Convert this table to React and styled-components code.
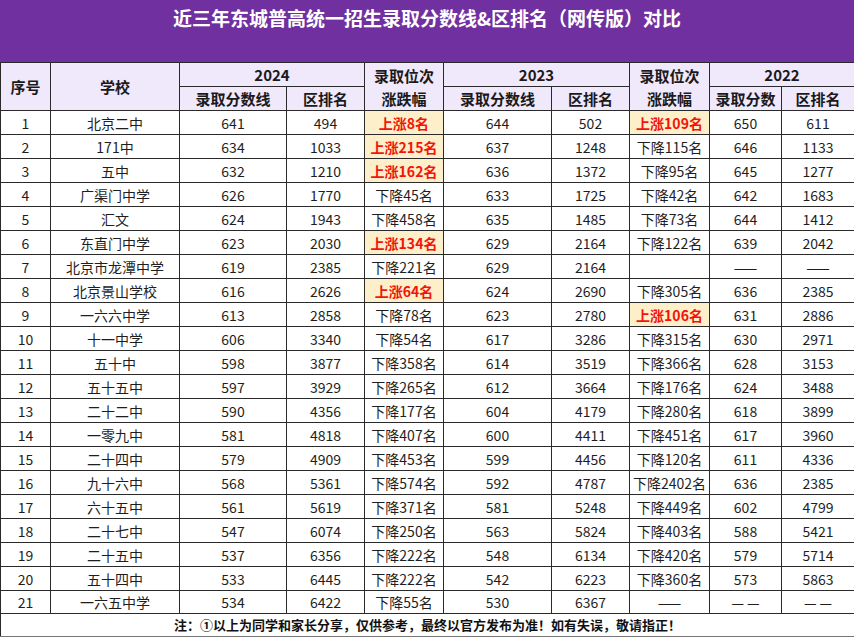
import React from "react";
import styled, { createGlobalStyle } from "styled-components";

const Global = createGlobalStyle`
  html, body { margin: 0; padding: 0; background: #fff; }
  body { font-family: "Noto Sans CJK SC", "Noto Sans", sans-serif; }
`;

const Page = styled.div`
  width: 854px;
  height: 637px;
  box-sizing: border-box;
  overflow: hidden;
  display: flex;
  flex-direction: column;
`;

const TitleBar = styled.div`
  height: 62px;
  flex: none;
  background: #7030a0;
  color: #fff;
  font-weight: 700;
  font-size: 19px;
  display: flex;
  justify-content: center;
  align-items: flex-start;
  padding-top: 5px;
  box-sizing: border-box;
  line-height: 26px;
`;

const Table = styled.table`
  width: 854px;
  border-collapse: collapse;
  table-layout: fixed;
`;

const Row = styled.tr`
  height: ${(p) => p.$h || 24}px;
`;

const Th = styled.th`
  background: #f0e8fb;
  border: 1px solid #2a2a2a;
  font-size: 15px;
  font-weight: 700;
  color: #1a1a1a;
  padding: 0;
  line-height: ${(p) => (p.$lh ? p.$lh : "22px")};
  text-align: center;
  vertical-align: middle;
`;

const Td = styled.td`
  border: 1px solid #2a2a2a;
  font-size: 14px;
  color: #1e1e1e;
  padding: 0;
  text-align: center;
  vertical-align: middle;
  line-height: 22px;
  white-space: nowrap;
  background: ${(p) => (p.$hl ? "#fdefc9" : "transparent")};
  ${(p) => p.$hl && `color: #f2140c; font-weight: 700;`}
`;

const Footer = styled.td`
  border: 1px solid #2a2a2a;
  border-bottom-color: #777;
  font-size: 13px;
  font-weight: 700;
  color: #111;
  text-align: center;
  padding: 0;
  line-height: 22px;
`;

const widths = [50, 129, 107, 78, 79, 108, 78, 80, 72, 73];

const data = [
  ["1", "北京二中", "641", "494", "上涨8名", "644", "502", "上涨109名", "650", "611"],
  ["2", "171中", "634", "1033", "上涨215名", "637", "1248", "下降115名", "646", "1133"],
  ["3", "五中", "632", "1210", "上涨162名", "636", "1372", "下降95名", "645", "1277"],
  ["4", "广渠门中学", "626", "1770", "下降45名", "633", "1725", "下降42名", "642", "1683"],
  ["5", "汇文", "624", "1943", "下降458名", "635", "1485", "下降73名", "644", "1412"],
  ["6", "东直门中学", "623", "2030", "上涨134名", "629", "2164", "下降122名", "639", "2042"],
  ["7", "北京市龙潭中学", "619", "2385", "下降221名", "629", "2164", "", "——", "——"],
  ["8", "北京景山学校", "616", "2626", "上涨64名", "624", "2690", "下降305名", "636", "2385"],
  ["9", "一六六中学", "613", "2858", "下降78名", "623", "2780", "上涨106名", "631", "2886"],
  ["10", "十一中学", "606", "3340", "下降54名", "617", "3286", "下降315名", "630", "2971"],
  ["11", "五十中", "598", "3877", "下降358名", "614", "3519", "下降366名", "628", "3153"],
  ["12", "五十五中", "597", "3929", "下降265名", "612", "3664", "下降176名", "624", "3488"],
  ["13", "二十二中", "590", "4356", "下降177名", "604", "4179", "下降280名", "618", "3899"],
  ["14", "一零九中", "581", "4818", "下降407名", "600", "4411", "下降451名", "617", "3960"],
  ["15", "二十四中", "579", "4909", "下降453名", "599", "4456", "下降120名", "611", "4336"],
  ["16", "九十六中", "568", "5361", "下降574名", "592", "4787", "下降2402名", "636", "2385"],
  ["17", "六十五中", "561", "5619", "下降371名", "581", "5248", "下降449名", "602", "4799"],
  ["18", "二十七中", "547", "6074", "下降250名", "563", "5824", "下降403名", "588", "5421"],
  ["19", "二十五中", "537", "6356", "下降222名", "548", "6134", "下降420名", "579", "5714"],
  ["20", "五十四中", "533", "6445", "下降222名", "542", "6223", "下降360名", "573", "5863"],
  ["21", "一六五中学", "534", "6422", "下降55名", "530", "6367", "——", "— —", "— —"],
];

export default function App() {
  return (
    <>
      <Global />
      <Page>
        <TitleBar>近三年东城普高统一招生录取分数线&amp;区排名（网传版）对比</TitleBar>
        <Table>
          <colgroup>
            {widths.map((w, i) => (
              <col key={i} style={{ width: w }} />
            ))}
          </colgroup>
          <thead>
            <Row>
              <Th rowSpan={2}>序号</Th>
              <Th rowSpan={2}>学校</Th>
              <Th colSpan={2}>2024</Th>
              <Th rowSpan={2} $lh="23px">
                录取位次
                <br />
                涨跌幅
              </Th>
              <Th colSpan={2}>2023</Th>
              <Th rowSpan={2} $lh="23px">
                录取位次
                <br />
                涨跌幅
              </Th>
              <Th colSpan={2}>2022</Th>
            </Row>
            <Row>
              <Th>录取分数线</Th>
              <Th>区排名</Th>
              <Th>录取分数线</Th>
              <Th>区排名</Th>
              <Th>录取分数</Th>
              <Th>区排名</Th>
            </Row>
          </thead>
          <tbody>
            {data.map((r, i) => (
              <Row key={i} $h={i === 20 ? 23 : 24}>
                {r.map((c, j) => (
                  <Td key={j} $hl={(j === 4 || j === 7) && c.startsWith("上涨")}>
                    {c}
                  </Td>
                ))}
              </Row>
            ))}
            <Row $h={23}>
              <Footer colSpan={10}>
                注：①以上为同学和家长分享，仅供参考，最终以官方发布为准！如有失误，敬请指正！
              </Footer>
            </Row>
          </tbody>
        </Table>
      </Page>
    </>
  );
}
